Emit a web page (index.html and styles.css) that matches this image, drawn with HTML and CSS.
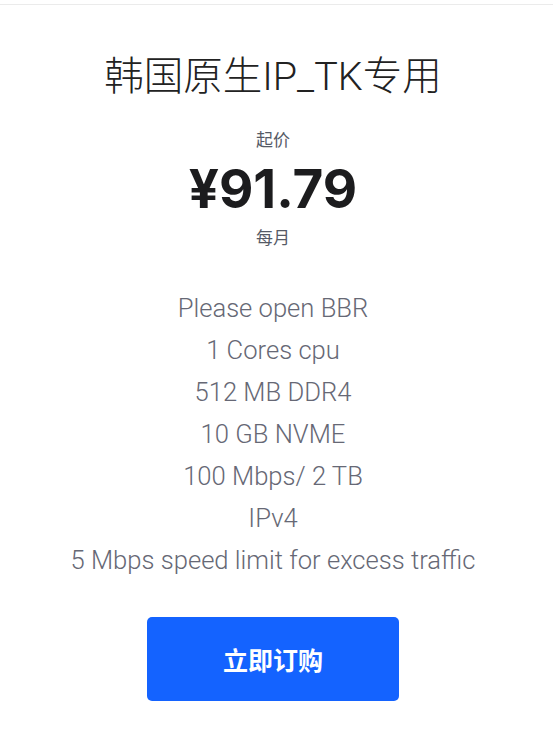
FILE: index.html
```html
<!DOCTYPE html>
<html lang="zh-CN">
<head>
    <meta charset="UTF-8">
    <meta name="viewport" content="width=device-width, initial-scale=1.0">
    <title>韩国原生IP_TK专用</title>
    <link rel="stylesheet" href="styles.css">
</head>
<body>
    <div class="topbar"></div>

    <div class="plan">
        <h2 class="plan-title">韩国原生IP_TK专用</h2>

        <div class="price-box">
            <div class="price-label">起价</div>
            <div class="price">¥91.79</div>
            <div class="price-label">每月</div>
        </div>

        <ul class="features">
            <li>Please open BBR</li>
            <li>1 Cores cpu</li>
            <li>512 MB DDR4</li>
            <li>10 GB NVME</li>
            <li>100 Mbps/ 2 TB</li>
            <li>IPv4</li>
            <li>5 Mbps speed limit for excess traffic</li>
        </ul>

        <a href="#" class="order-btn">立即订购</a>
    </div>
</body>
</html>
```

FILE: styles.css
```css
body {
    margin: 0;
    background: #ffffff;
    font-family: Roboto, "Noto Sans CJK SC", sans-serif;
}
.topbar {
    height: 4px;
    border-bottom: 1px solid #ebebeb;
}
.plan {
    display: flex;
    flex-direction: column;
    align-items: center;
    text-align: center;
    padding-right: 7px;
}
.plan-title {
    margin: 48px 0 0;
    font-size: 39.5px;
    font-weight: 300;
    line-height: 48px;
    color: #222222;
}
.price-box {
    margin-top: 27px;
}
.price-label {
    font-size: 17px;
    line-height: 24px;
    color: #555a66;
}
.price {
    margin: 6px 0;
    font-family: Inter, "Noto Sans CJK SC", sans-serif;
    font-size: 53px;
    font-weight: 700;
    line-height: 62px;
    color: #1c1c1e;
}
.features {
    list-style: none;
    margin: 37px 0 0;
    padding: 0;
}
.features li {
    font-size: 25.6px;
    font-weight: 300;
    line-height: 42px;
    color: #666875;
}
.order-btn {
    display: flex;
    align-items: center;
    justify-content: center;
    width: 252px;
    height: 84px;
    margin-top: 36px;
    background: #1463ff;
    border-radius: 5px;
    color: #ffffff;
    font-family: "Noto Sans CJK SC", sans-serif;
    font-size: 25px;
    font-weight: 700;
    text-decoration: none;
}
```
